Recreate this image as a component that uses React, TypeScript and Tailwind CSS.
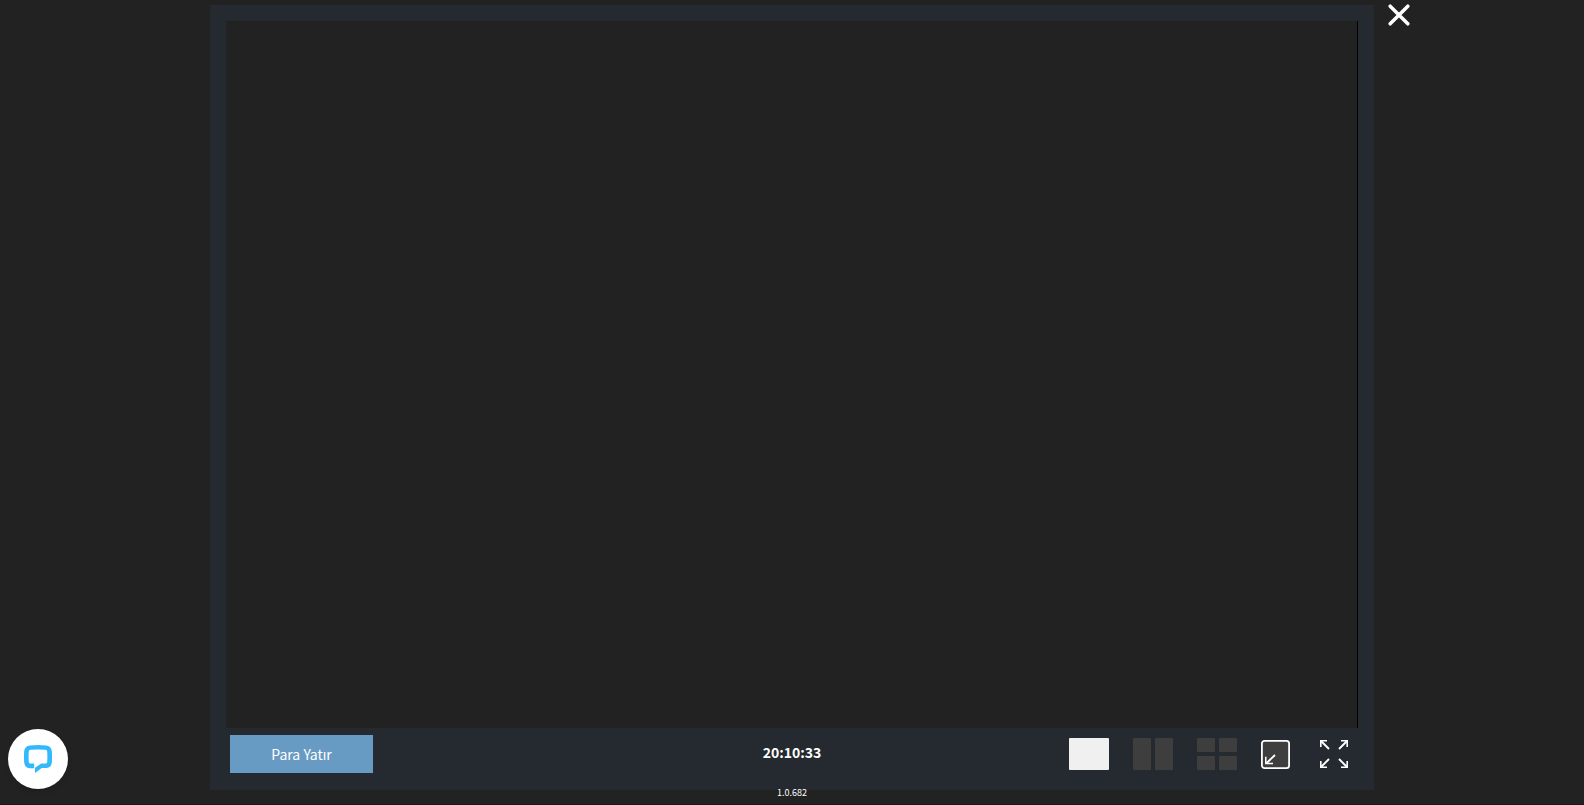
interface ILayoutButtonProps {
  label: string;
  tiles: string[];
}

const LayoutButton = ({label, tiles}: ILayoutButtonProps) => {
  return (
    <button type="button" aria-label={label} className="flex h-8 w-10 flex-wrap gap-1">
      {tiles.map((t, i) => (
        <span key={i} className={t} />
      ))}
    </button>
  )
}

const layouts: ILayoutButtonProps[] = [
  {label: "Tek oyun", tiles: ["h-8 w-10 rounded-[1px] bg-[#f0f0f0]"]},
  {label: "İki oyun", tiles: Array(2).fill("h-8 w-[18px] rounded-[1px] bg-[#3e3e3e]")},
  {label: "Dört oyun", tiles: Array(4).fill("h-[14px] w-[18px] rounded-[1px] bg-[#3e3e3e]")},
]

const CloseIcon = () => (
  <svg className="size-[22px]" viewBox="0 0 22 22" fill="none" stroke="#fff" strokeWidth="3.5" strokeLinecap="round">
    <path d="M2.2 2.2 19.8 19.8M19.8 2.2 2.2 19.8" />
  </svg>
)

const MinimizeIcon = () => (
  <svg className="size-[29px]" viewBox="0 0 29 29" fill="none" stroke="#fff">
    <rect x=".9" y=".9" width="27.2" height="27.2" rx="2.6" fill="#3e3e3e" strokeWidth="1.8" />
    <path d="M4.8 16.8V23.6H12" strokeWidth="1.5" />
    <path d="M14 15 5.4 23.2" strokeWidth="1.9" />
  </svg>
)

const FullscreenIcon = () => (
  <svg className="size-7" viewBox="0 0 28 28" fill="none" stroke="#fff">
    <path d="M.8 7V.8H7M21 .8H27.2V7M.8 21V27.2H7M21 27.2H27.2V21" strokeWidth="1.6" />
    <path d="M1 1 9 9M27 1 19 9M1 27 9 19M27 27 19 19" strokeWidth="1.9" />
  </svg>
)

const ChatIcon = () => (
  <svg className="size-7" viewBox="0 0 28 28">
    <path
      fill="#32b9fc"
      fillRule="evenodd"
      d="M6 .4Q14-.4 22 .4Q27.3 1 27.8 6Q28.3 12 27.8 17.5Q27.3 22.5 22.5 23H17.8L11 28V22.8L17.2 18.6H21.5Q23 18.5 23.2 17Q23.6 12 23.2 6.5Q23 5 21.5 4.8Q14 4.3 6.5 4.8Q5 5 4.8 6.5Q4.4 12 4.8 17Q5 18.5 6.5 18.6H10.2V23.2H5.5Q.7 22.7.2 17.5Q-.3 12 .2 6Q.7 1 6 .4Z"
    />
  </svg>
)

export default function App() {
  return (
    <div className="flex min-h-screen flex-col border-b border-[#20141c] bg-[#222222] font-['Noto_Sans_CJK_SC','Noto_Sans',sans-serif] text-white">
      <div className="flex pt-[5px]">
        <div className="flex-1" />
        <main className="w-full max-w-[1164px] bg-[#252a31] px-4 pt-4">
          <div className="aspect-[1132/707] border-r border-black bg-[#222222]" />
          <div className="grid h-[62px] grid-cols-[1fr_auto_1fr] items-start px-1 pt-[7px]">
            <button type="button" className="h-[38px] w-[143px] bg-[#679bc3] text-sm leading-6">Para Yatır</button>
            <time className="pt-[5px] text-sm leading-6 font-bold">20:10:33</time>
            <div className="flex items-center gap-6 justify-self-end pt-[3px] pr-[6px]">
              {layouts.map((l) => (
                <LayoutButton key={l.label} {...l} />
              ))}
              <button type="button" aria-label="Küçült"><MinimizeIcon /></button>
              <button type="button" aria-label="Tam ekran" className="pl-[6px]"><FullscreenIcon /></button>
            </div>
          </div>
        </main>
        <div className="flex-1">
          <button type="button" aria-label="Kapat" className="-mt-px ml-[14px] block"><CloseIcon /></button>
        </div>
      </div>
      <p className="text-center text-[9px] leading-[6px]">1.0.682</p>
      <button
        type="button"
        aria-label="Canlı destek"
        className="fixed bottom-4 left-2 flex size-[60px] items-center justify-center rounded-full bg-white shadow-md"
      >
        <ChatIcon />
      </button>
    </div>
  )
}
